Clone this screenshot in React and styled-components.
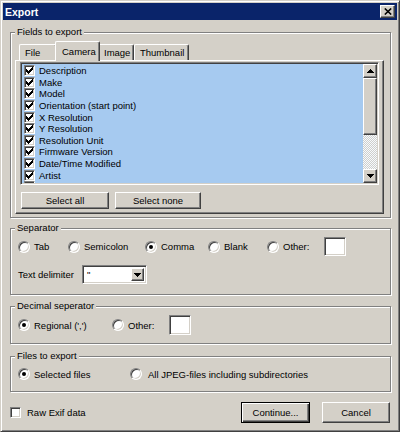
import React from "react";
import styled, { createGlobalStyle, css } from "styled-components";

const GlobalStyle = createGlobalStyle`
  html, body {
    margin: 0;
    padding: 0;
    background: #d4d0c8;
  }
  * {
    box-sizing: border-box;
  }
`;

const raised = css`
  border: 1px solid;
  border-color: #fff #404040 #404040 #fff;
  box-shadow: inset -1px -1px #808080;
  background: #d4d0c8;
`;

const sunken = css`
  border: 1px solid;
  border-color: #808080 #fff #fff #808080;
  box-shadow: inset 1px 1px #404040, inset -1px -1px #d4d0c8;
`;

const tabs = [
  { label: "File", w: 38 },
  { label: "Camera", w: 41, active: true },
  { label: "Image", w: 36 },
  { label: "Thumbnail", w: 55 },
];

const fields = [
  "Description",
  "Make",
  "Model",
  "Orientation (start point)",
  "X Resolution",
  "Y Resolution",
  "Resolution Unit",
  "Firmware Version",
  "Date/Time Modified",
  "Artist",
  "Initial Date",
];

function CheckBox({ checked }) {
  return (
    <Box>
      {checked && (
        <svg width="7" height="7" viewBox="0 0 7 7" shapeRendering="crispEdges">
          {[2, 3, 4, 3, 2, 1, 0].map((y, i) => (
            <rect key={i} x={i} y={y} width="1" height="3" fill="#000" />
          ))}
        </svg>
      )}
    </Box>
  );
}

function Arrow({ up }) {
  return (
    <svg width="7" height="4" viewBox="0 0 7 4" shapeRendering="crispEdges">
      {[0, 1, 2, 3].map((r) => (
        <rect
          key={r}
          x={up ? 3 - r : r}
          y={r}
          width={up ? 1 + r * 2 : 7 - r * 2}
          height="1"
          fill="#000"
        />
      ))}
    </svg>
  );
}

function RadioOption({ w, on, children }) {
  return (
    <Option $w={w}>
      <Radio $on={on} />
      <span>{children}</span>
    </Option>
  );
}

export default function App() {
  return (
    <>
      <GlobalStyle />
      <Window>
        <TitleBar>
          <Title>Export</Title>
          <CloseButton>
            <svg width="8" height="7" viewBox="0 0 8 7">
              <path d="M0.8 0.5 L7.2 6.5 M7.2 0.5 L0.8 6.5" stroke="#000" strokeWidth="1.6" />
            </svg>
          </CloseButton>
        </TitleBar>

        <Body>
          <Group $pt={3} $pb={3}>
            <Caption>Fields to export</Caption>
            <TabRow>
              {tabs.map((t) => (
                <Tab key={t.label} $w={t.w} $active={t.active}>
                  {t.label}
                </Tab>
              ))}
            </TabRow>
            <TabPanel>
              <FieldList>
                <Items>
                  {fields.map((f) => (
                    <Item key={f}>
                      <CheckBox checked />
                      <span>{f}</span>
                    </Item>
                  ))}
                </Items>
                <ScrollBar>
                  <ScrollButton>
                    <Arrow up />
                  </ScrollButton>
                  <Thumb />
                  <Track />
                  <ScrollButton>
                    <Arrow />
                  </ScrollButton>
                </ScrollBar>
              </FieldList>
              <ButtonRow>
                <Button $w={88} $h={17}>Select all</Button>
                <Button $w={86} $h={17}>Select none</Button>
              </ButtonRow>
            </TabPanel>
          </Group>

          <Group $mt={4} $pt={3} $pb={10}>
            <Caption>Separator</Caption>
            <Row $h={19}>
              <RadioOption w={50}>Tab</RadioOption>
              <RadioOption w={77}>Semicolon</RadioOption>
              <RadioOption w={63} on>Comma</RadioOption>
              <RadioOption w={59}>Blank</RadioOption>
              <RadioOption w={57}>Other:</RadioOption>
              <TextBox $w={22} $h={19} />
            </Row>
            <Row $h={19} $mt={9}>
              <Label $w={64}>Text delimiter</Label>
              <Combo>
                <ComboValue>"</ComboValue>
                <DropButton>
                  <Arrow />
                </DropButton>
              </Combo>
            </Row>
          </Group>

          <Group $mt={5} $pt={3} $pb={8}>
            <Caption>Decimal seperator</Caption>
            <Row $h={20}>
              <RadioOption w={94} on>Regional (',')</RadioOption>
              <RadioOption w={57}>Other:</RadioOption>
              <TextBox $w={22} $h={20} />
            </Row>
          </Group>

          <Group $mt={6} $pt={5} $pb={10}>
            <Caption>Files to export</Caption>
            <Row $h={14}>
              <RadioOption w={112} on>Selected files</RadioOption>
              <RadioOption>All JPEG-files including subdirectories</RadioOption>
            </Row>
          </Group>

          <Footer>
            <Option>
              <CheckBox />
              <span>Raw Exif data</span>
            </Option>
            <FooterButtons>
              <Button $w={69} $h={21} $default>Continue...</Button>
              <Button $w={68} $h={21}>Cancel</Button>
            </FooterButtons>
          </Footer>
        </Body>
      </Window>
    </>
  );
}

const Window = styled.div`
  width: 400px;
  height: 432px;
  background: #d4d0c8;
  border: 1px solid;
  border-color: #d4d0c8 #404040 #404040 #d4d0c8;
  box-shadow: inset 1px 1px #fff, inset -1px -1px #808080;
  padding: 2px;
  display: flex;
  flex-direction: column;
  font-family: "Liberation Sans", Arial, sans-serif;
  font-size: 9.5px;
  color: #000;
`;

const TitleBar = styled.div`
  height: 17px;
  background: #0a246a;
  display: flex;
  align-items: center;
  justify-content: space-between;
  padding: 0 2px 0 2px;
`;

const Title = styled.span`
  color: #fff;
  font-weight: bold;
  font-size: 10.5px;
`;

const CloseButton = styled.div`
  ${raised};
  width: 15px;
  height: 13px;
  display: flex;
  align-items: center;
  justify-content: center;
`;

const Body = styled.div`
  flex: 1;
  display: flex;
  flex-direction: column;
  padding: 6px 6px 0 7px;
`;

const Group = styled.fieldset`
  margin: ${(p) => p.$mt || 0}px 0 0 0;
  padding: ${(p) => p.$pt}px 6px ${(p) => p.$pb}px 4px;
  min-width: 0;
  border: 1px solid #808080;
  box-shadow: inset 1px 1px #fff, 1px 1px #fff;
`;

const Caption = styled.legend`
  padding: 0 2px;
  margin: 0;
  line-height: 12px;
  background: #d4d0c8;
`;

const TabRow = styled.div`
  display: flex;
  align-items: flex-end;
  height: 19px;
  padding-left: 4px;
`;

const Tab = styled.div`
  position: relative;
  z-index: ${(p) => (p.$active ? 2 : 0)};
  width: ${(p) => p.$w + (p.$active ? 4 : 0)}px;
  height: ${(p) => (p.$active ? 20 : 16)}px;
  margin: 0 ${(p) => (p.$active ? -2 : 0)}px ${(p) => (p.$active ? -1 : 0)}px;
  padding-left: ${(p) => (p.$active ? 6 : 5)}px;
  background: #d4d0c8;
  border-top: 1px solid #fff;
  border-left: 1px solid #fff;
  border-right: 1px solid #404040;
  box-shadow: inset -1px 0 #808080;
  border-radius: 2px 2px 0 0;
  display: flex;
  align-items: center;
`;

const TabPanel = styled.div`
  position: relative;
  z-index: 1;
  height: 154px;
  border: 1px solid;
  border-color: #fff #404040 #404040 #fff;
  box-shadow: inset -1px -1px #808080;
  padding: 1px 4px 0 4px;
`;

const FieldList = styled.div`
  ${sunken};
  height: 123px;
  display: flex;
  background: #a6caf0;
  padding: 1px 1px 1px 1px;
`;

const Items = styled.div`
  flex: 1;
  overflow: hidden;
  padding: 1px 0 0 2px;
`;

const Item = styled.div`
  height: 11.6px;
  display: flex;
  align-items: center;
  gap: 4px;
  white-space: nowrap;
`;

const Box = styled.span`
  ${sunken};
  flex: none;
  width: 11px;
  height: 11px;
  background: #fff;
  display: inline-flex;
  align-items: center;
  justify-content: center;
`;

const ScrollBar = styled.div`
  width: 14px;
  display: flex;
  flex-direction: column;
`;

const ScrollButton = styled.div`
  ${raised};
  height: 14px;
  display: flex;
  align-items: center;
  justify-content: center;
`;

const Thumb = styled.div`
  ${raised};
  height: 57px;
`;

const Track = styled.div`
  flex: 1;
  background: repeating-conic-gradient(#d4d0c8 0 25%, #fff 0 50%) 0 0 / 2px 2px;
  opacity: 0.9;
`;

const ButtonRow = styled.div`
  display: flex;
  gap: 6px;
  margin-top: 7px;
  padding-left: 1px;
`;

const Button = styled.div`
  ${raised};
  width: ${(p) => p.$w}px;
  height: ${(p) => p.$h}px;
  display: flex;
  align-items: center;
  justify-content: center;
  ${(p) =>
    p.$default &&
    css`
      border: 1px solid #000;
      box-shadow: inset 1px 1px #fff, inset -1px -1px #404040, inset -2px -2px #808080;
    `}
`;

const Row = styled.div`
  display: flex;
  align-items: center;
  height: ${(p) => p.$h}px;
  margin-top: ${(p) => p.$mt || 0}px;
  padding-left: 3px;
`;

const Option = styled.label`
  display: flex;
  align-items: center;
  gap: ${(p) => (p.$w ? 4 : 6)}px;
  width: ${(p) => (p.$w ? `${p.$w}px` : "auto")};
  flex: none;
  white-space: nowrap;
`;

const Radio = styled.span`
  ${sunken};
  flex: none;
  width: 12px;
  height: 12px;
  border-radius: 50%;
  background: #fff;
  display: inline-flex;
  align-items: center;
  justify-content: center;

  &::after {
    content: "";
    width: 4px;
    height: 4px;
    border-radius: 50%;
    background: ${(p) => (p.$on ? "#000" : "transparent")};
  }
`;

const TextBox = styled.span`
  ${sunken};
  width: ${(p) => p.$w}px;
  height: ${(p) => p.$h}px;
  background: #fff;
`;

const Label = styled.span`
  width: ${(p) => p.$w}px;
`;

const Combo = styled.div`
  ${sunken};
  width: 65px;
  height: 19px;
  background: #fff;
  display: flex;
  align-items: stretch;
  padding: 2px;
`;

const ComboValue = styled.span`
  flex: 1;
  padding-left: 2px;
  display: flex;
  align-items: center;
`;

const DropButton = styled.div`
  ${raised};
  width: 13px;
  display: flex;
  align-items: center;
  justify-content: center;
`;

const Footer = styled.div`
  display: flex;
  align-items: center;
  justify-content: space-between;
  margin-top: 10px;
  padding-right: 1px;
`;

const FooterButtons = styled.div`
  display: flex;
  gap: 12px;
`;
